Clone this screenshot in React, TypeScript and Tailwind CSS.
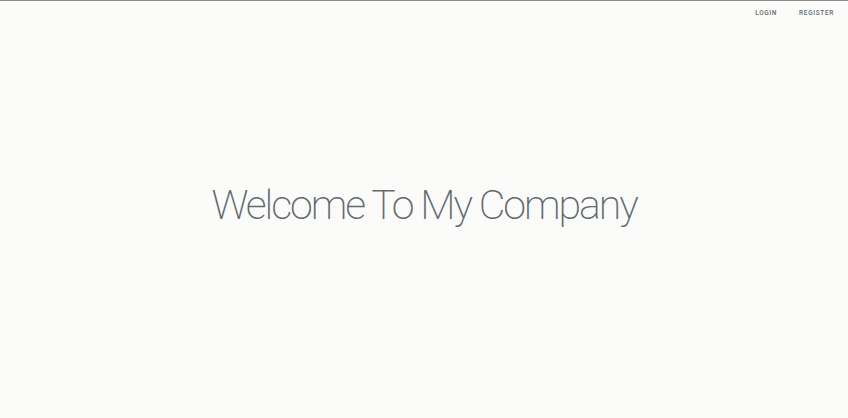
export default function App() {
  return (
    <div className="h-screen w-full bg-[#fbfcfa] text-[#636b6f] flex flex-col border-t border-[#8e8e8c]" style={{ fontFamily: 'Roboto, "Open Sans", sans-serif' }}>
      {/* Top right links */}
      <div className="flex justify-end pr-[14px] pt-[8px]">
        <a href="#" className="pr-[22px] text-[6.5px] font-medium tracking-[0.1em] uppercase">Login</a>
        <a href="#" className="text-[6.5px] font-medium tracking-[0.1em] uppercase">Register</a>
      </div>

      {/* Title */}
      <div className="flex-1 flex items-center justify-center pb-[26px]">
        <h1 className="text-[41px] font-extralight tracking-[-0.05em] leading-none">Welcome To My Company</h1>
      </div>
    </div>
  );
}
